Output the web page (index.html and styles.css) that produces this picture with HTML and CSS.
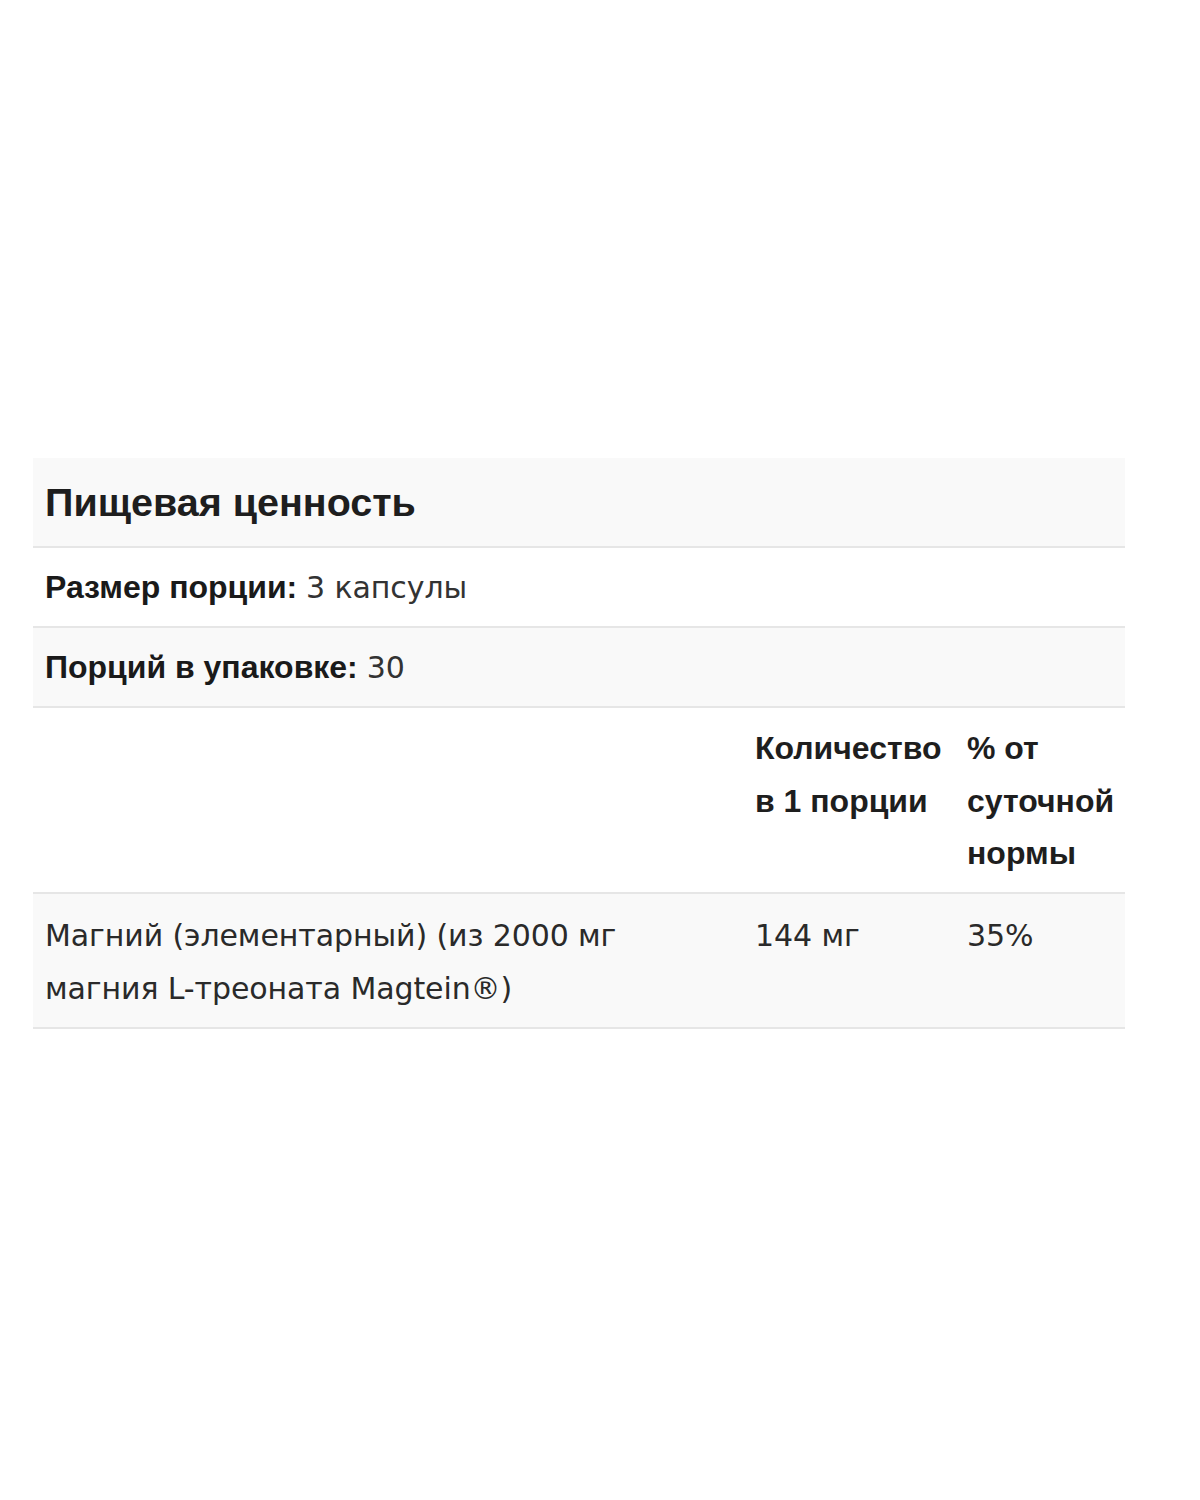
FILE: index.html
```html
<!DOCTYPE html>
<html lang="ru">
<head>
<meta charset="utf-8">
<title>Пищевая ценность</title>
<link rel="stylesheet" href="styles.css">
</head>
<body>
<main class="page">
  <table class="facts">
    <colgroup>
      <col class="c-name">
      <col class="c-amount">
      <col class="c-dv">
    </colgroup>
    <tbody>
      <tr class="row-title shade">
        <th colspan="3" class="title">Пищевая ценность</th>
      </tr>
      <tr>
        <td colspan="3" class="info"><b>Размер порции:</b> <span class="val">3 капсулы</span></td>
      </tr>
      <tr class="shade">
        <td colspan="3" class="info"><b>Порций в упаковке:</b> <span class="val">30</span></td>
      </tr>
      <tr class="head">
        <th></th>
        <th>Количество в&nbsp;1&nbsp;порции</th>
        <th>% от суточной нормы</th>
      </tr>
      <tr class="shade item">
        <td>Магний (элементарный) (из 2000 мг магния L-треоната Magtein®)</td>
        <td>144 мг</td>
        <td>35%</td>
      </tr>
    </tbody>
  </table>
</main>
</body>
</html>
```

FILE: styles.css
```css
html, body {
  margin: 0;
  padding: 0;
  background: #ffffff;
}

.page {
  padding: 458px 75px 0 33px;
}

.facts {
  width: 1092px;
  border-collapse: collapse;
  table-layout: fixed;
  font-family: "Liberation Sans", Arial, sans-serif;
  color: #1e1e1e;
}

.c-name { width: 710px; }
.c-amount { width: 212px; }
.c-dv { width: 170px; }

.facts tr {
  border-bottom: 2px solid #e6e6e6;
}

.facts tr.shade {
  background: #f9f9f9;
}

.facts th,
.facts td {
  padding: 13px 12px 12px 12px;
  text-align: left;
  vertical-align: top;
  font-size: 32px;
  line-height: 53px;
  letter-spacing: 0;
}

.facts th {
  font-weight: 700;
}

.facts .title {
  font-size: 39.5px;
  line-height: 64px;
  padding: 12px 12px 12px 12px;
}

.facts .head th {
  padding: 14px 12px 12px 12px;
  line-height: 52.5px;
}

.info b {
  font-weight: 700;
  color: #1a1a1a;
}

.info .val {
  font-family: "DejaVu Sans", Verdana, sans-serif;
  font-size: 30px;
  color: #333333;
  letter-spacing: -0.1px;
}

.facts .item td {
  font-family: "DejaVu Sans", Verdana, sans-serif;
  color: #2a2a2a;
  letter-spacing: -0.1px;
  font-size: 30px;
  padding: 15px 12px 12px 12px;
}
```
